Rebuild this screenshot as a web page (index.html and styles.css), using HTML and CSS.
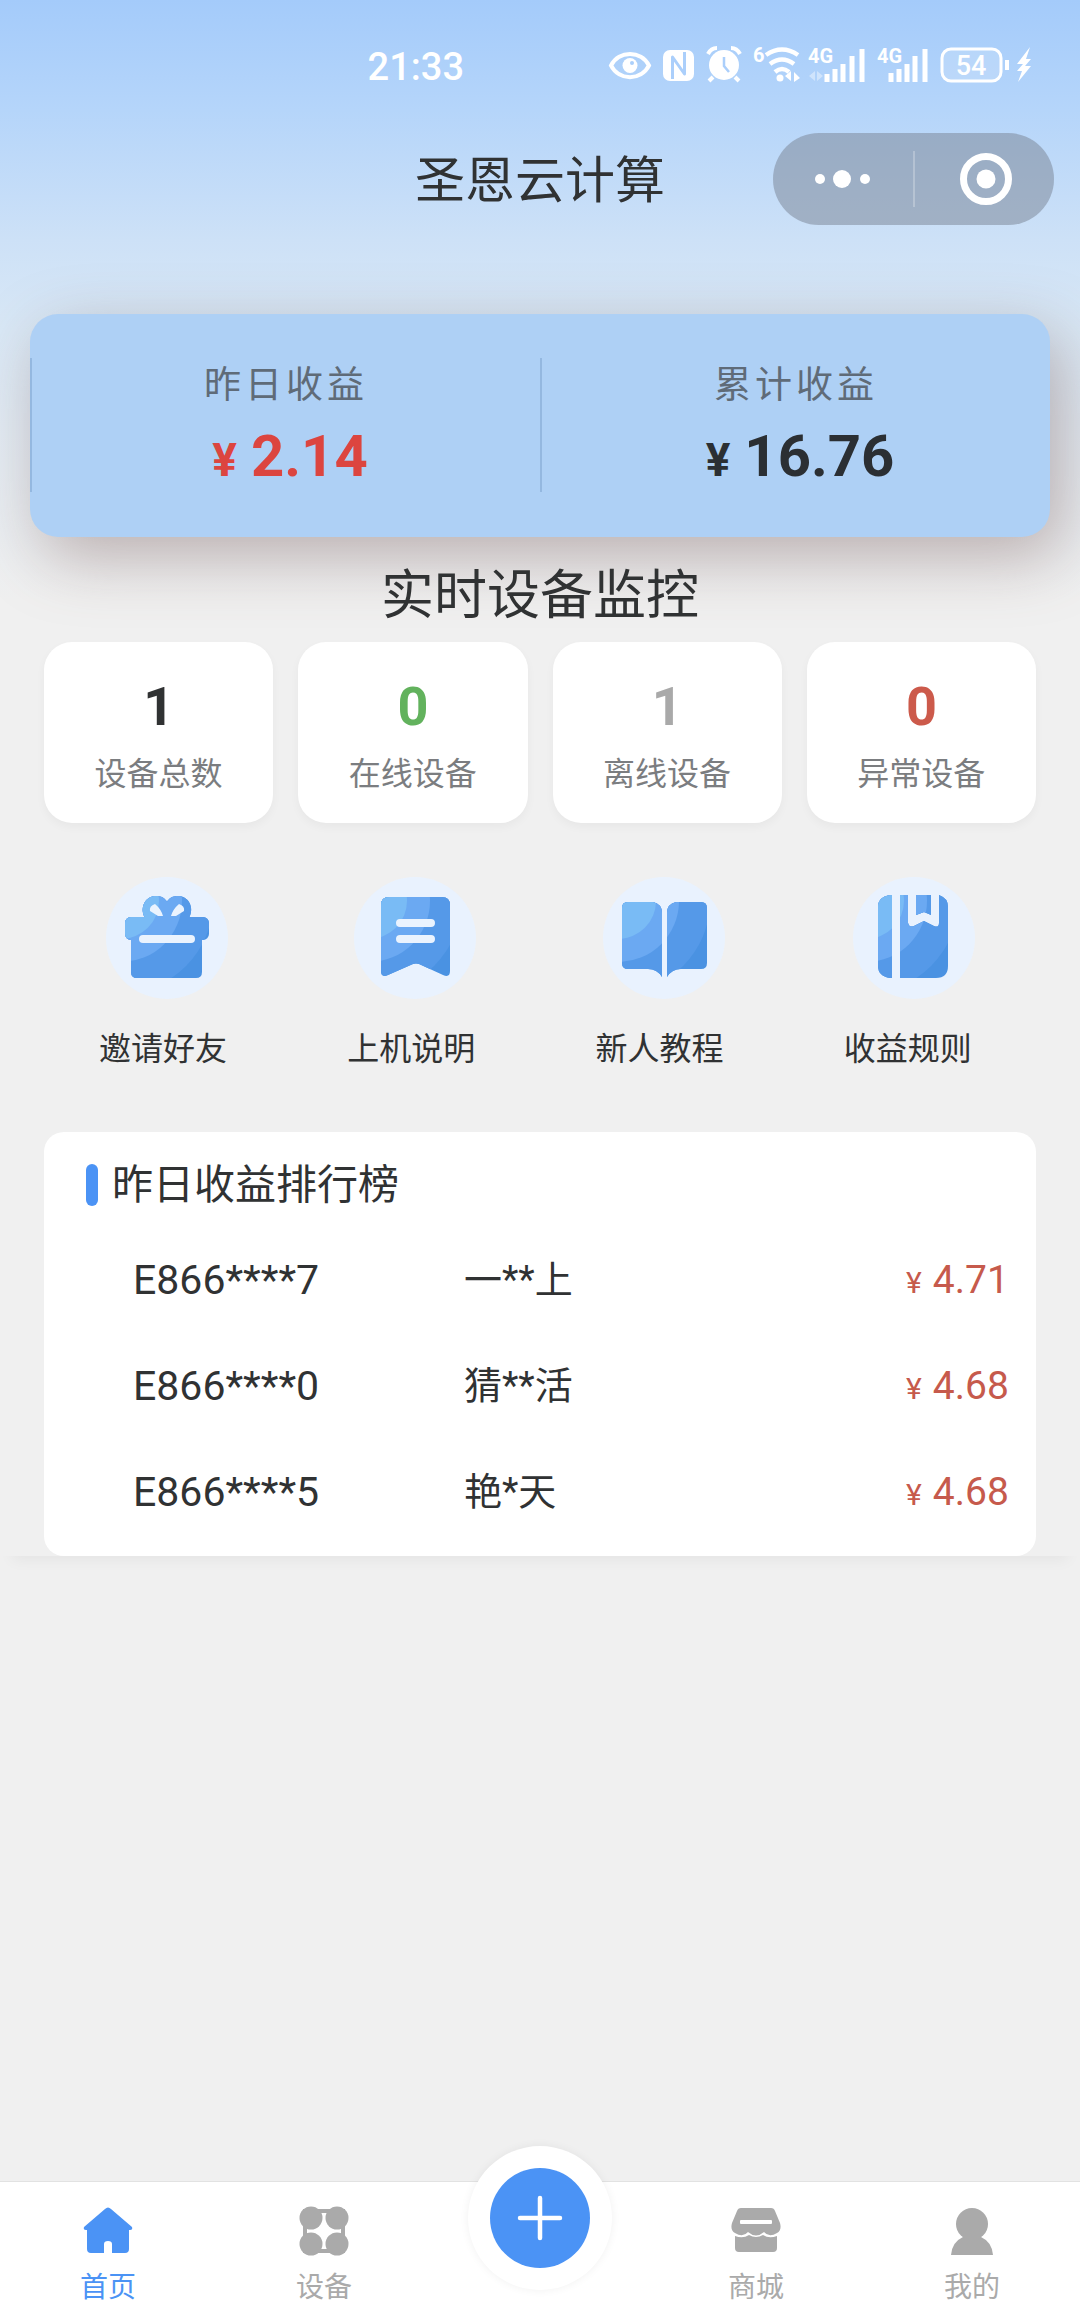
FILE: index.html
```html
<!DOCTYPE html>
<html lang="zh-CN">
<head>
    <meta charset="UTF-8">
    <meta name="viewport" content="width=device-width, initial-scale=1.0">
    <title>圣恩云计算</title>
    <link rel="stylesheet" href="styles.css">
</head>
<body>
    <div class="page">
        <div class="status-bar">
            <span class="time">21:33</span>
            <div class="status-icons">
                <svg width="42" height="40" viewBox="0 0 42 40">
                    <path d="M2 21.500C10 6 32 6 40 21.500C32 37 10 37 2 21.500Z" fill="none" stroke="#fff" stroke-width="4"/>
                    <circle cx="21" cy="21.500" r="7.500" fill="#fff"/>
                    <circle cx="23" cy="19" r="2" fill="#abcffb"/>
                </svg>
                <svg width="33" height="40" viewBox="0 0 33 40">
                    <rect x="1" y="6" width="31" height="31" rx="7" fill="#fff"/>
                    <path d="M10.500 35V13L22.500 30V8" fill="none" stroke="#abcffb" stroke-width="3" stroke-linejoin="round"/>
                </svg>
                <svg width="36" height="40" viewBox="0 0 36 40">
                    <circle cx="18" cy="21" r="15" fill="#fff"/>
                    <path d="M2 10Q5 4 11 4M34 10Q31 4 25 4M7 33l-4 4M29 33l4 4" fill="none" stroke="#fff" stroke-width="4"/>
                    <path d="M18 13v9l5 6" fill="none" stroke="#abcffb" stroke-width="2.500"/>
                </svg>
                <svg width="44" height="40" viewBox="0 0 44 40">
                    <text x="0" y="18" class="net-text">6</text>
                    <path d="M13 11Q29 0 45 11M17 20Q29 11 41 20M22 28Q29 22 36 28" fill="none" stroke="#fff" stroke-width="4.500"/>
                    <circle cx="27" cy="34" r="3.500" fill="#fff"/>
                    <path d="M38 27v10l-6-5zM41 38V28l6 6z" fill="#fff"/>
                </svg>
                <svg width="58" height="40" viewBox="0 0 58 40">
                    <text x="0" y="19" class="net-text">4G</text>
                    <path d="M7 27v10l-6-5zM9 27v10l6-5z" fill="#fff" opacity=".4"/>
                    <path d="M19 38V30M27 38V25M35 38V20M44 38V12M54 38V5" stroke="#fff" stroke-width="5"/>
                </svg>
                <svg width="52" height="40" viewBox="0 0 52 40">
                    <text x="0" y="19" class="net-text">4G</text>
                    <path d="M14 38V29M22 38V25M30 38V20M38 38V12M48 38V5" stroke="#fff" stroke-width="5"/>
                </svg>
                <svg width="92" height="40" viewBox="0 0 92 40">
                    <rect x="2" y="5" width="59" height="32" rx="9" fill="#fff" fill-opacity=".15" stroke="#fff" stroke-width="3"/>
                    <text x="31" y="31" text-anchor="middle" class="battery-text">54</text>
                    <path d="M67 16v10" stroke="#fff" stroke-width="4"/>
                    <path d="M90 3L77 20h6l-6 7h5l-4 11L91 22h-6l6-7h-5z" fill="#fff"/>
                </svg>
            </div>
        </div>

        <header class="nav">
            <h1>圣恩云计算</h1>
            <div class="capsule">
                <button aria-label="更多">
                    <svg width="60" height="56" viewBox="0 0 60 56" fill="#fff">
                        <circle cx="7" cy="28" r="5"/><circle cx="29" cy="28" r="9"/><circle cx="52" cy="28" r="5"/>
                    </svg>
                </button>
                <button aria-label="关闭">
                    <svg width="56" height="56" viewBox="0 0 56 56">
                        <circle cx="30" cy="28" r="22.500" fill="none" stroke="#fff" stroke-width="7"/>
                        <circle cx="30" cy="28" r="9.500" fill="#fff"/>
                    </svg>
                </button>
            </div>
        </header>

        <section class="income">
            <div class="income-item">
                <div class="income-label">昨日收益</div>
                <div class="income-num red"><small>¥</small>2.14</div>
            </div>
            <div class="income-item">
                <div class="income-label">累计收益</div>
                <div class="income-num"><small>¥</small>16.76</div>
            </div>
        </section>

        <h2 class="monitor-title">实时设备监控</h2>
        <section class="stats">
            <div class="stat"><b>1</b><span>设备总数</span></div>
            <div class="stat online"><b>0</b><span>在线设备</span></div>
            <div class="stat offline"><b>1</b><span>离线设备</span></div>
            <div class="stat error"><b>0</b><span>异常设备</span></div>
        </section>

        <!-- shared colour bands of the four menu icons -->
        <svg class="defs" width="0" height="0">
            <defs>
                <g id="bands">
                    <rect width="140" height="122" fill="#4a92e2"/>
                    <circle cx="28" cy="24" r="92" fill="#5599e8"/>
                    <circle cx="28" cy="24" r="61" fill="#6ba9f2"/>
                    <circle cx="28" cy="24" r="38" fill="#79bbf5"/>
                </g>
                <clipPath id="gift">
                    <path d="M52 41C46 30 53 19 63 19C68 19 72 21 74 25C76 21 80 19 85 19C95 19 102 30 96 41Z"/>
                    <rect x="32" y="40" width="84" height="23" rx="6"/>
                    <path d="M38 58H109V95Q109 101 103 101H44Q38 101 38 95Z"/>
                </clipPath>
                <clipPath id="mark">
                    <path d="M48 20H101Q109 20 109 28V94Q109 101 102 98L78 87Q75 86 72 87L47 98Q40 101 40 94V28Q40 20 48 20Z"/>
                </clipPath>
                <clipPath id="book">
                    <path d="M38 25H63Q72 27 72 36V100Q67 92 58 92H38Q32 92 32 86V31Q32 25 38 25Z"/>
                    <path d="M111 25H86Q77 27 77 36V100Q82 92 91 92H111Q117 92 117 86V31Q117 25 111 25Z"/>
                </clipPath>
                <clipPath id="rules">
                    <path d="M54 18V101H52Q40 99 40 89V30Q40 20 52 18Z"/>
                    <path d="M62 18H70V46Q71 51 76 49L86 44L96 49Q101 51 101 46V18Q110 21 110 30V89Q110 101 98 101H62Z"/>
                    <path d="M78 18H93V38L86 35L78 38Z"/>
                </clipPath>
            </defs>
        </svg>
        <nav class="menu">
            <a href="#">
                <svg width="140" height="122" viewBox="0 0 140 122">
                    <circle cx="74" cy="61" r="61" fill="#e9f2fe"/>
                    <use href="#bands" clip-path="url(#gift)"/>
                    <path d="M57 34Q56 29 62 27Q68 32 70 39H65ZM91 34Q92 29 86 27Q80 32 78 39H83Z" fill="#eaf3fe"/>
                    <path d="M50 62H98" stroke="#eaf3fe" stroke-width="8" stroke-linecap="round"/>
                </svg>
                <span>邀请好友</span>
            </a>
            <a href="#">
                <svg width="140" height="122" viewBox="0 0 140 122">
                    <circle cx="74" cy="61" r="61" fill="#e9f2fe"/>
                    <use href="#bands" clip-path="url(#mark)"/>
                    <path d="M59 46H90M59 62H90" stroke="#eaf3fe" stroke-width="8" stroke-linecap="round"/>
                </svg>
                <span>上机说明</span>
            </a>
            <a href="#">
                <svg width="140" height="122" viewBox="0 0 140 122">
                    <circle cx="74" cy="61" r="61" fill="#e9f2fe"/>
                    <use href="#bands" clip-path="url(#book)"/>
                </svg>
                <span>新人教程</span>
            </a>
            <a href="#">
                <svg width="140" height="122" viewBox="0 0 140 122">
                    <circle cx="76" cy="61" r="61" fill="#e9f2fe"/>
                    <use href="#bands" clip-path="url(#rules)"/>
                </svg>
                <span>收益规则</span>
            </a>
        </nav>

        <div class="rank-wrap">
            <section class="rank">
                <h3>昨日收益排行榜</h3>
                <table>
                    <tr>
                        <td class="device">E866****7</td>
                        <td class="name">一**上</td>
                        <td class="price"><small>¥</small>4.71</td>
                    </tr>
                    <tr>
                        <td class="device">E866****0</td>
                        <td class="name">猜**活</td>
                        <td class="price"><small>¥</small>4.68</td>
                    </tr>
                    <tr>
                        <td class="device">E866****5</td>
                        <td class="name">艳*天</td>
                        <td class="price"><small>¥</small>4.68</td>
                    </tr>
                </table>
            </section>
        </div>

        <nav class="tabbar">
            <a href="#" class="active">
                <svg width="54" height="54" viewBox="0 0 54 54" fill="currentColor">
                    <path d="M24 5Q27 2 30 5L51 23Q52 26 49 26H48V45Q48 49 44 49H31V40Q31 37 27 37Q23 37 23 40V49H10Q6 49 6 45V26H5Q2 26 3 23Z"/>
                </svg>
                <span>首页</span>
            </a>
            <a href="#">
                <svg width="54" height="54" viewBox="0 0 54 54" fill="currentColor">
                    <rect x="8" y="7" width="38" height="40" fill="none" stroke="currentColor" stroke-width="4"/>
                    <circle cx="14" cy="14" r="11.500"/><circle cx="40" cy="14" r="11.500"/>
                    <circle cx="14" cy="40" r="11.500"/><circle cx="40" cy="40" r="11.500"/>
                </svg>
                <span>设备</span>
            </a>
            <button class="add" aria-label="添加">
                <svg width="100" height="100" viewBox="0 0 100 100">
                    <circle cx="50" cy="50" r="50" fill="#4b93f5"/>
                    <path d="M50 30V70M30 50H70" stroke="#fff" stroke-width="4.500" stroke-linecap="round"/>
                </svg>
            </button>
            <a href="#">
                <svg width="54" height="54" viewBox="0 0 54 54" fill="currentColor">
                    <path d="M12 4H42Q45 4 46 7L51 19Q53 26 48 29Q40 34 35 28Q27 35 19 28Q14 34 6 29Q1 26 3 19L8 7Q9 4 12 4Z"/>
                    <path d="M6 32Q14 35 20 31Q27 35 34 31Q40 35 48 32V44Q48 48 44 48H10Q6 48 6 44Z"/>
                    <rect x="11" y="16" width="32" height="4" rx="1" fill="#fff"/>
                </svg>
                <span>商城</span>
            </a>
            <a href="#">
                <svg width="54" height="54" viewBox="0 0 54 54" fill="currentColor">
                    <circle cx="27" cy="20" r="16"/>
                    <path d="M6 51Q7 38 18 33H36Q47 38 48 51Z"/>
                </svg>
                <span>我的</span>
            </a>
        </nav>
    </div>
</body>
</html>
```

FILE: styles.css
```css
* {
    box-sizing: border-box;
}
body {
    margin: 0;
    background-color: #f0f0f0;
    color: #303233;
    font-family: Roboto, "Noto Sans CJK SC", sans-serif;
}
h1, h2, h3 {
    margin: 0;
    font-weight: 400;
}
a {
    color: inherit;
    text-decoration: none;
}
button {
    padding: 0;
    border: none;
    background: none;
    cursor: pointer;
}
svg {
    display: block;
    overflow: visible;
}
.page {
    display: flex;
    flex-direction: column;
    min-height: 100vh;
    background: linear-gradient(#a4cbfa 0, #b5d5fa 110px, #cde1f7 240px, #d9e8f6 330px, #f0f0f0 600px);
}
.defs {
    position: absolute;
}

/* status bar */
.status-bar {
    display: flex;
    justify-content: flex-end;
    align-items: center;
    height: 128px;
    padding-right: 48px;
    color: #fff;
}
.time {
    margin-right: 145px;
    padding-top: 5px;
    font-size: 38px;
    font-weight: 500;
    line-height: 44px;
}
.status-icons {
    display: flex;
    gap: 11px;
}
.net-text {
    fill: #fff;
    font-size: 20px;
    font-weight: 700;
}
.battery-text {
    fill: #fff;
    font-size: 27px;
    font-weight: 500;
}

/* title and capsule */
.nav {
    display: grid;
    grid-template-columns: 1fr auto 1fr;
    align-items: center;
    height: 102px;
    padding: 0 26px;
}
.nav h1 {
    grid-column: 2;
    padding-top: 4px;
    font-size: 50px;
    line-height: 60px;
}
.capsule {
    display: flex;
    align-items: center;
    justify-self: end;
    width: 281px;
    height: 92px;
    border-radius: 46px;
    background-color: rgba(120, 130, 145, 0.5);
}
.capsule button {
    flex: 1;
    display: flex;
    justify-content: center;
}
.capsule button + button {
    border-left: 2px solid rgba(255, 255, 255, 0.25);
}

/* income card */
.income {
    display: flex;
    margin: 84px 30px 0;
    padding: 44px 0 45px;
    border-radius: 28px;
    background-color: #aed0f5;
    box-shadow: 12px 20px 65px rgba(115, 80, 75, 0.4);
}
.income-item {
    flex: 1;
    height: 134px;
    padding-top: 3px;
    border-left: 2px solid #94b8e0;
    text-align: center;
}
.income-label {
    color: #5f6b78;
    font-size: 37px;
    letter-spacing: 4px;
    line-height: 50px;
}
.income-num {
    margin-top: 10px;
    padding-left: 8px;
    color: #2b2f33;
    font-size: 58px;
    font-weight: 700;
    line-height: 70px;
}
.income-num small {
    margin-right: 14px;
    font-size: 46px;
    line-height: 1;
}
.income-num.red {
    color: #dc453f;
}

/* device stats */
.monitor-title {
    margin: 22px 0 9px;
    font-size: 53px;
    line-height: 74px;
    text-align: center;
}
.stats {
    display: grid;
    grid-template-columns: repeat(4, 1fr);
    gap: 25px;
    padding: 0 44px;
}
.stat {
    display: flex;
    flex-direction: column;
    align-items: center;
    gap: 17px;
    padding: 35px 0 29px;
    border-radius: 28px;
    background-color: #fff;
    box-shadow: 0 4px 10px rgba(0, 0, 0, 0.04);
}
.stat b {
    font-size: 54px;
    line-height: 60px;
}
.stat span {
    color: #7b7d80;
    font-size: 32px;
    line-height: 40px;
}
.online b {
    color: #62b25d;
}
.offline b {
    color: #a9a9a9;
}
.error b {
    color: #cc5a4b;
}

/* menu icons */
.menu {
    display: grid;
    grid-template-columns: repeat(4, 1fr);
    margin-top: 54px;
    padding: 0 48px 0 39px;
}
.menu a {
    display: flex;
    flex-direction: column;
    align-items: center;
    gap: 30px;
    font-size: 32px;
    line-height: 40px;
}

/* ranking */
.rank-wrap {
    margin: 63px 0 60px;
    padding: 0 44px;
    box-shadow: 0 16px 14px -12px rgba(0, 0, 0, 0.05);
}
.rank {
    padding: 32px 0 11px;
    border-radius: 20px;
    background-color: #fff;
}
.rank h3 {
    display: flex;
    align-items: center;
    gap: 14px;
    margin: 0 0 21px 42px;
    font-size: 41px;
    line-height: 46px;
    height: 42px;
}
.rank h3::before {
    content: "";
    width: 12px;
    height: 42px;
    border-radius: 6px;
    background-color: #4b93f5;
}
.rank table {
    width: 100%;
    border-collapse: collapse;
    table-layout: fixed;
}
.rank td {
    height: 106px;
    padding: 0;
    line-height: 48px;
}
.rank .device {
    width: 420px;
    padding-left: 89px;
    font-size: 41px;
}
.rank .name {
    font-size: 38px;
}
.rank .price {
    width: 130px;
    color: #c65a4c;
    font-size: 39px;
}
.price small {
    margin-right: 11px;
    font-size: 30px;
    line-height: 1;
}

/* bottom tabs */
.tabbar {
    display: grid;
    grid-template-columns: repeat(5, 1fr);
    height: 143px;
    margin-top: auto;
    border-top: 1px solid #e2e2e2;
    background-color: #fff;
    color: #aaa;
    font-size: 28px;
    line-height: 36px;
}
.tabbar a {
    display: flex;
    flex-direction: column;
    align-items: center;
    gap: 12px;
    padding-top: 22px;
}
.tabbar .active {
    color: #4b93f5;
}
.add {
    justify-self: center;
    width: 144px;
    height: 144px;
    margin-top: -36px;
    padding: 22px;
    border-radius: 50%;
    background-color: #fff;
    box-shadow: 0 0 10px rgba(0, 0, 0, 0.06);
}
```
